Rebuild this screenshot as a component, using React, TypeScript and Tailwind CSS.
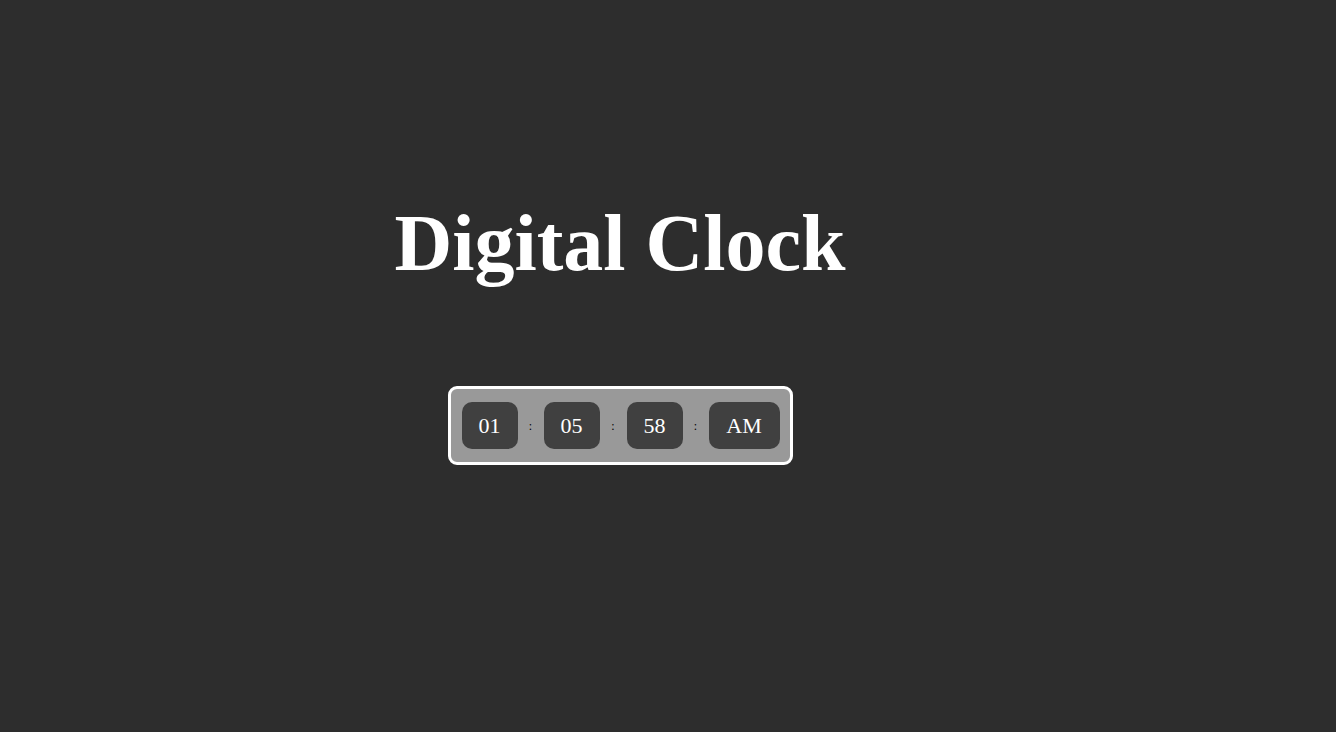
const parts = ["01", "05", "58"]

const Segment = ({ value, wide }: { value: string; wide?: boolean }) => (
  <div
    className={`flex h-[47px] items-center justify-center rounded-[10px] bg-[#404040] text-[22px] text-white ${
      wide ? "w-[71px]" : "w-[56px]"
    }`}>
    {value}
  </div>
)

const Colon = ({ wide }: { wide?: boolean }) => (
  <span
    className={`text-center text-[12px] leading-none text-black ${
      wide ? "w-[27px]" : "w-[26px]"
    }`}>
    :
  </span>
)

export default function App() {
  return (
    <div className="min-h-[732px] w-full bg-[#2d2d2d] font-['Liberation_Serif',serif]">
      <div className="flex w-[1240px] flex-col items-center">
        <h1 className="mt-[199px] text-[80px] font-bold leading-[89px] text-white">
          Digital Clock
        </h1>

        <div className="mt-[98px] flex items-center rounded-[9px] border-[3px] border-white bg-[#999999] py-[13px] pl-[11px] pr-[10px]">
          {parts.map((p, i) => (
            <div key={p} className="flex items-center">
              <Segment value={p} />
              <Colon wide={i === 1} />
            </div>
          ))}
          <Segment value="AM" wide />
        </div>
      </div>
    </div>
  )
}
